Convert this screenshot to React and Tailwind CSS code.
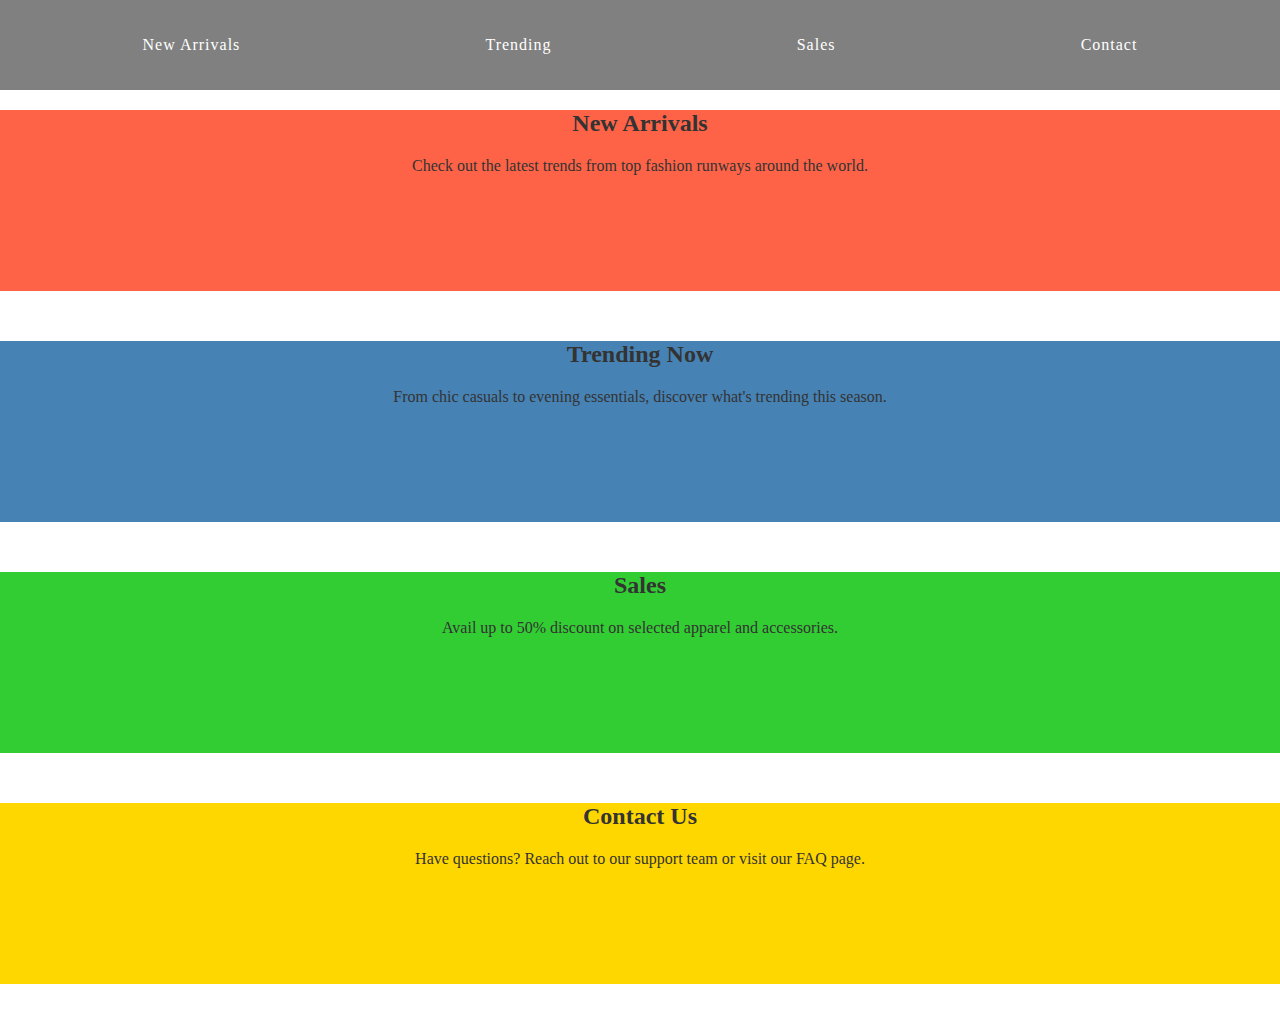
import React from 'react'

const links = ['New Arrivals', 'Trending', 'Sales', 'Contact']

const sections = [
  {
    title: 'New Arrivals',
    text: 'Check out the latest trends from top fashion runways around the world.',
    bg: 'bg-[#ff6347]',
  },
  {
    title: 'Trending Now',
    text: "From chic casuals to evening essentials, discover what's trending this season.",
    bg: 'bg-[#4682b4]',
  },
  {
    title: 'Sales',
    text: 'Avail up to 50% discount on selected apparel and accessories.',
    bg: 'bg-[#32cd32]',
  },
  {
    title: 'Contact Us',
    text: 'Have questions? Reach out to our support team or visit our FAQ page.',
    bg: 'bg-[#ffd700]',
  },
]

const App = () => {
  return (
    <div className="min-h-screen bg-white font-['Liberation_Serif','Times_New_Roman',serif] text-[#333]">
      {/* Навигация */}
      <nav className="h-[90px] bg-[#808080] px-[20px] flex items-center justify-around">
        {links.map(link => (
          <a key={link} href="#" className="text-[16px] tracking-[1px] text-white">
            {link}
          </a>
        ))}
      </nav>

      {/* Секции */}
      <main className="pt-[20px] pb-[50px] flex flex-col gap-[50px]">
        {sections.map(section => (
          <section key={section.title} className={`h-[181px] text-center ${section.bg}`}>
            <h2 className="text-[24px] leading-[26px] font-bold">{section.title}</h2>
            <p className="mt-[21px] text-[16px] leading-[18px]">{section.text}</p>
          </section>
        ))}
      </main>
    </div>
  )
}

export default App
